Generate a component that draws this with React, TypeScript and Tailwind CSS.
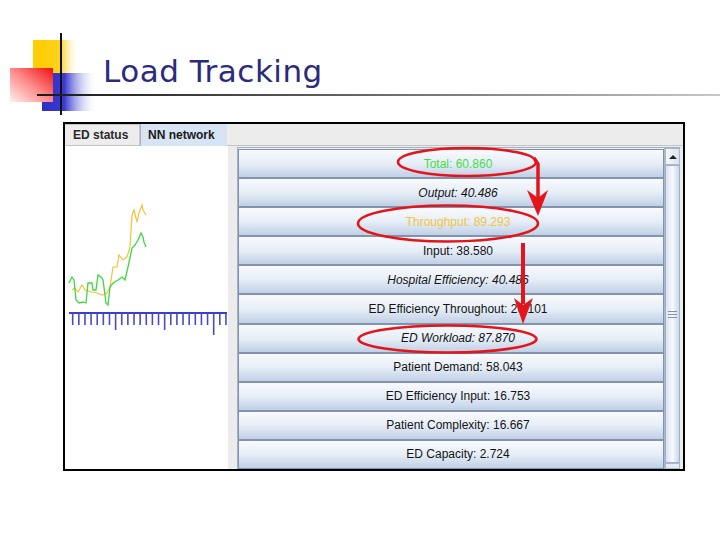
import React from 'react';
import { clsx } from 'clsx';

interface Row {
  label: string;
  italic?: boolean;
  tone?: 'green' | 'gold';
}

const ROWS: Row[] = [
  { label: 'Total: 60.860', tone: 'green' },
  { label: 'Output: 40.486', italic: true },
  { label: 'Throughput: 89.293', tone: 'gold' },
  { label: 'Input: 38.580' },
  { label: 'Hospital Efficiency: 40.486', italic: true },
  { label: 'ED Efficiency Throughout: 26.101' },
  { label: 'ED Workload: 87.870', italic: true },
  { label: 'Patient Demand: 58.043' },
  { label: 'ED Efficiency Input: 16.753' },
  { label: 'Patient Complexity: 16.667' },
  { label: 'ED Capacity: 2.724' },
];

// page coordinates, traced from the plot
const YELLOW = [
  [72, 290], [75, 288], [78, 292], [82, 285], [85, 290], [92, 292], [97, 293], [102, 295],
  [107, 293], [110, 287], [113, 267], [117, 267], [119, 255], [123, 260], [127, 257],
  [130, 247], [132, 215], [134, 210], [137, 222], [139, 213], [142, 205], [143, 210], [146, 215],
];
const GREEN = [
  [69, 283], [72, 277], [74, 280], [76, 300], [79, 303], [83, 302], [86, 303], [88, 283],
  [92, 283], [93, 290], [96, 290], [98, 275], [102, 278], [103, 280], [106, 303], [108, 305],
  [110, 287], [113, 283], [118, 280], [122, 277], [125, 280], [128, 267], [132, 248],
  [135, 245], [138, 240], [141, 233], [143, 237], [144, 242], [146, 247],
];

const pts = (p: number[][]) => p.map(([x, y]) => `${x},${y}`).join(' ');

function Logo() {
  return (
    <svg className="absolute left-0 top-0" width="100" height="120" viewBox="0 0 100 120">
      <defs>
        <linearGradient id="yel" x1="0" y1="0" x2="1" y2="0">
          <stop offset="0" stopColor="#ffcc00" />
          <stop offset="0.6" stopColor="#ffd21a" />
          <stop offset="1" stopColor="#ffffff" stopOpacity="0" />
        </linearGradient>
        <linearGradient id="blu" x1="0" y1="0" x2="1" y2="0">
          <stop offset="0" stopColor="#2f2fc8" />
          <stop offset="0.4" stopColor="#3a3acf" />
          <stop offset="1" stopColor="#ffffff" stopOpacity="0" />
        </linearGradient>
        <linearGradient id="red" x1="0" y1="1" x2="1" y2="0">
          <stop offset="0" stopColor="#fff0f0" />
          <stop offset="0.5" stopColor="#ff8a8a" />
          <stop offset="1" stopColor="#ee1111" />
        </linearGradient>
      </defs>
      <rect x="33" y="40" width="46" height="34" fill="url(#yel)" />
      <rect x="42" y="73" width="56" height="38" fill="url(#blu)" />
      <rect x="10" y="68" width="43" height="34" fill="url(#red)" />
      <rect x="60" y="33" width="2" height="82" fill="#111" />
    </svg>
  );
}

function Chart() {
  const ticks = Array.from({ length: 26 }, (_, i) => 72.7 + 6.13 * i);
  return (
    <svg className="block" width="163" height="323" viewBox="65 146 163 323">
      <polyline points={pts(YELLOW)} fill="none" stroke="#f2c23a" strokeWidth="1.2" />
      <polyline points={pts(GREEN)} fill="none" stroke="#3fd83f" strokeWidth="1.3" />
      <line x1="69" y1="313" x2="227" y2="313" stroke="#3d3dc9" strokeWidth="2" />
      {ticks.map((x, i) => (
        <line
          key={i}
          x1={x}
          y1="313"
          x2={x}
          y2={i === 23 ? 335 : i === 7 || i === 15 ? 330 : 325}
          stroke="#4a4ac8"
          strokeWidth="1.6"
        />
      ))}
    </svg>
  );
}

function Annotations() {
  return (
    <svg className="absolute left-0 top-0 pointer-events-none" width="720" height="540" viewBox="0 0 720 540">
      <g fill="none" stroke="#e3151a" strokeWidth="2.6">
        <ellipse cx="467" cy="162" rx="69" ry="14" />
        <ellipse cx="448" cy="223.5" rx="90" ry="18" />
        <ellipse cx="447.5" cy="339" rx="89" ry="13.5" />
      </g>
      <path d="M534 158 L538 164 L538 198" fill="none" stroke="#e3151a" strokeWidth="3.5" />
      <polygon points="527,190 538,198 548,190 538,216" fill="#e3151a" />
      <line x1="523" y1="243" x2="523" y2="304" stroke="#e3151a" strokeWidth="4" />
      <polygon points="514,298 523,305 533,298 523,324" fill="#e3151a" />
    </svg>
  );
}

function ScrollBar() {
  return (
    <div className="w-[16px] flex flex-col bg-[#e9eef5] border-l border-[#a9b8cc]">
      <div className="h-[17px] flex items-center justify-center border border-[#a9b8cc] bg-linear-to-r from-[#f3f6fa] to-[#dbe5f1]">
        <div className="w-0 h-0 border-l-[4px] border-r-[4px] border-b-[4px] border-l-transparent border-r-transparent border-b-[#222]" />
      </div>
      <div className="flex-1 flex items-center justify-center border border-[#9fb1c9] bg-linear-to-r from-[#d8e3f0] via-[#f7f9fc] to-[#c9d8ea]">
        <div className="flex flex-col gap-[2px]">
          <div className="w-[9px] h-px bg-[#7f93ae]" />
          <div className="w-[9px] h-px bg-[#7f93ae]" />
          <div className="w-[9px] h-px bg-[#7f93ae]" />
        </div>
      </div>
      <div className="h-[6px] border border-[#a9b8cc] bg-[#e4ebf4]" />
    </div>
  );
}

export default function App() {
  return (
    <div className="relative w-[720px] h-[540px] bg-white overflow-hidden">
      {/* Slide header */}
      <div className="relative h-[122px]">
        <Logo />
        <h1
          className="relative pl-[103px] pt-[56px] text-[31px] leading-none tracking-[0.5px] text-[#2b2b7e]"
          style={{ fontFamily: '"DejaVu Sans", Verdana, sans-serif' }}
        >
          Load Tracking
        </h1>
        <div className="relative ml-[37px] mt-[7px] h-[2px] bg-linear-to-r from-[#1a1a1a] via-[#6b6b6b] to-[#c8c8c8]" />
      </div>

      {/* Application screenshot */}
      <div
        className="ml-[63px] w-[622px] h-[349px] border-2 border-black flex flex-col bg-[#ececec]"
        style={{ fontFamily: '"Liberation Sans", Arial, sans-serif' }}
      >
        <div className="h-[22px] flex items-end border-b border-[#c4c4c4]">
          <div className="h-[21px] w-[75px] flex items-center pl-[8px] bg-[#ededed] border-t border-r border-[#c8c8c8] text-[12px] font-bold text-[#2a2a2a]">
            ED status
          </div>
          <div className="h-[22px] w-[87px] flex items-center pl-[7px] bg-[#d7e4f3] border-l border-[#b0b0b0] text-[12px] font-bold text-[#1a1a1a] -mb-px">
            NN network
          </div>
        </div>

        <div className="flex-1 flex min-h-0">
          <div className="w-[163px] bg-white">
            <Chart />
          </div>
          <div className="w-[9px] bg-[#ececec]" />
          <div className="flex-1 flex pr-[3px] pt-px">
            <div className="flex-1 flex border-t border-l border-[#a3b1c4]">
              <div className="flex-1 flex flex-col pt-px">
                {ROWS.map((row) => (
                  <div
                    key={row.label}
                    className="flex-1 flex items-center justify-center pl-[14px] border border-[#8193ad] bg-linear-to-b from-[#f8fafd] via-[#e7eef7] to-[#c0d0e5] text-[12px]"
                  >
                    <span
                      className={clsx(
                        row.italic && 'italic',
                        row.tone === 'green'
                          ? 'text-[#44dd44]'
                          : row.tone === 'gold'
                            ? 'text-[#f0c53c]'
                            : 'text-[#141414]'
                      )}
                    >
                      {row.label}
                    </span>
                  </div>
                ))}
              </div>
              <ScrollBar />
            </div>
          </div>
        </div>
      </div>

      <Annotations />
    </div>
  );
}
